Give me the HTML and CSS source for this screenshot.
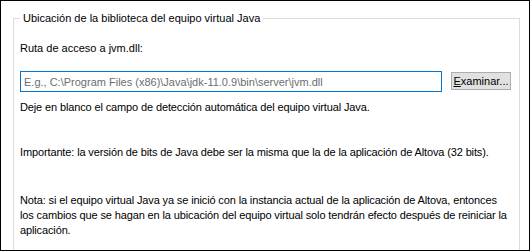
FILE: index.html
```html
<!DOCTYPE html>
<html lang="es">
<head>
<meta charset="utf-8">
<title>Ubicación de la biblioteca del equipo virtual Java</title>
<link rel="stylesheet" href="styles.css">
</head>
<body>
<div class="window">
  <fieldset class="group">
    <legend class="group-title">Ubicación de la biblioteca del equipo virtual Java</legend>
    <p class="label">Ruta de acceso a jvm.dll:</p>
    <div class="path-row">
      <input class="path-input" type="text" placeholder="E.g., C:\Program Files (x86)\Java\jdk-11.0.9\bin\server\jvm.dll">
      <button class="browse-btn" type="button"><u>E</u>xaminar...</button>
    </div>
    <p class="hint">Deje en blanco el campo de detección automática del equipo virtual Java.</p>
    <p class="important">Importante: la versión de bits de Java debe ser la misma que la de la aplicación de Altova (32 bits).</p>
    <p class="note">Nota: si el equipo virtual Java ya se inició con la instancia actual de la aplicación de Altova, entonces<br>los cambios que se hagan en la ubicación del equipo virtual solo tendrán efecto después de reiniciar la<br>aplicación.</p>
  </fieldset>
</div>
</body>
</html>
```

FILE: styles.css
```css
html, body {
  margin: 0;
  padding: 0;
  background: #ffffff;
}

.window {
  box-sizing: border-box;
  width: 530px;
  height: 251px;
  border: 1px solid #000000;
  background: #ffffff;
  overflow: hidden;
  font-family: "Liberation Sans", Arial, sans-serif;
  font-size: 11px;
  line-height: 15px;
  color: #000000;
}

.group {
  margin: 10px 9px 0 12px;
  padding: 0 0 30px 6px;
  border: 1px solid #dcdcdc;
  min-width: 0;
}

.group-title {
  padding: 0 3px;
  margin: 0;
  line-height: 15px;
}

.group p {
  margin: 0;
  white-space: nowrap;
}

.label {
  margin-top: 15px !important;
}

.path-row {
  display: flex;
  align-items: flex-start;
  margin-top: 15px;
}

.path-input {
  box-sizing: border-box;
  width: 422px;
  height: 21px;
  margin: 0;
  padding: 0 3px;
  border: 1px solid #0078d7;
  outline: none;
  font: inherit;
  color: #000000;
  background: #ffffff;
}

.path-input::placeholder {
  color: #6d6d6d;
  opacity: 1;
}

.browse-btn {
  box-sizing: border-box;
  width: 60px;
  height: 18px;
  margin: 1px 0 0 9px;
  padding: 0;
  border: 1px solid #adadad;
  background: #e1e1e1;
  font: inherit;
  line-height: 15px;
  color: #000000;
}

.hint,
.important,
.note {
  letter-spacing: -0.13px;
}

.hint {
  margin-top: 8px !important;
}

.important {
  margin-top: 30px !important;
}

.note {
  margin-top: 33px !important;
}
```
